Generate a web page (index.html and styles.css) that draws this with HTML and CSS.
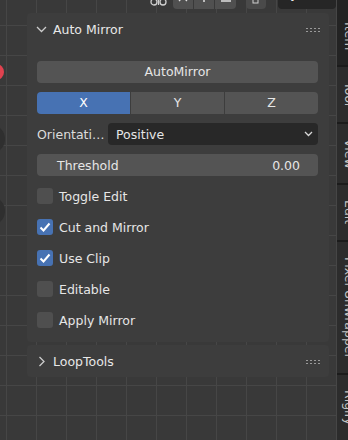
FILE: index.html
```html
<!DOCTYPE html>
<html lang="en">
<head>
    <meta charset="UTF-8">
    <link rel="stylesheet" href="styles.css">
</head>
<body>
    <div class="screen">
        <div class="main">
            <!-- tool header, only its lower edge is in view -->
            <div class="toolbar">
                <span class="tool-icon">
                    <svg width="17" height="20" viewBox="0 0 17 20"><circle cx="4" cy="13" r="3" fill="none" stroke="#d0d0d0" stroke-width="1.3"/><circle cx="13" cy="13" r="3" fill="none" stroke="#d0d0d0" stroke-width="1.3"/><path d="M8.5 6v10" stroke="#d0d0d0" stroke-width="1.3"/></svg>
                </span>
                <span class="tool-group">
                    <span class="tool-seg"><svg width="10" height="20" viewBox="0 0 10 20"><path d="M1 12l4 -4 4 4" fill="none" stroke="#e0e0e0" stroke-width="1.3"/></svg></span>
                    <span class="tool-seg"><svg width="10" height="20" viewBox="0 0 10 20"><path d="M5 6v7" stroke="#e0e0e0" stroke-width="1.5"/></svg></span>
                    <span class="tool-seg"><svg width="12" height="20" viewBox="0 0 12 20"><path d="M1 12h10" stroke="#e0e0e0" stroke-width="1.5"/><path d="M1 8h10" stroke="#e0e0e0" stroke-width="1.2"/></svg></span>
                </span>
                <span class="tool-btn"><svg width="10" height="20" viewBox="0 0 10 20"><rect x="2" y="9" width="5" height="5" fill="none" stroke="#cfcfcf" stroke-width="1"/></svg></span>
                <span class="tool-options">Options</span>
            </div>

            <div class="region">
                <div class="panel">
                    <div class="panel-head">
                        <svg class="chevron" width="11" height="7" viewBox="0 0 11 7"><path d="M1 1l4.5 4.5 4.5 -4.5" fill="none" stroke="#cccccc" stroke-width="1.3"/></svg>
                        <span class="panel-title">Auto Mirror</span>
                        <span class="grip"></span>
                    </div>
                    <div class="panel-body">
                        <div class="btn">AutoMirror</div>
                        <div class="seg-row">
                            <div class="seg active">X</div>
                            <div class="seg">Y</div>
                            <div class="seg">Z</div>
                        </div>
                        <div class="prop-row">
                            <span class="prop-label">Orientati…</span>
                            <div class="dropdown">
                                <span>Positive</span>
                                <svg width="9" height="6" viewBox="0 0 9 6"><path d="M1 1l3.5 3.5 3.5 -3.5" fill="none" stroke="#d8d8d8" stroke-width="1.3"/></svg>
                            </div>
                        </div>
                        <div class="number">
                            <span>Threshold</span>
                            <span>0.00</span>
                        </div>
                        <div class="check-row"><span class="box"></span>Toggle Edit</div>
                        <div class="check-row"><span class="box on"><svg width="16" height="16" viewBox="0 0 16 16"><path d="M3.5 8.5l3 3 6 -7" fill="none" stroke="#ffffff" stroke-width="2"/></svg></span>Cut and Mirror</div>
                        <div class="check-row"><span class="box on"><svg width="16" height="16" viewBox="0 0 16 16"><path d="M3.5 8.5l3 3 6 -7" fill="none" stroke="#ffffff" stroke-width="2"/></svg></span>Use Clip</div>
                        <div class="check-row"><span class="box"></span>Editable</div>
                        <div class="check-row"><span class="box"></span>Apply Mirror</div>
                    </div>
                </div>
                <div class="panel">
                    <div class="panel-head">
                        <svg class="chevron" width="11" height="11" viewBox="0 0 11 11"><path d="M3.5 1l4.5 4.5 -4.5 4.5" fill="none" stroke="#cccccc" stroke-width="1.3"/></svg>
                        <span class="panel-title">LoopTools</span>
                        <span class="grip"></span>
                    </div>
                </div>
            </div>
        </div>

        <div class="tabs">
            <div class="tab tab-item">Item</div>
            <div class="tab">Tool</div>
            <div class="tab">View</div>
            <div class="tab">Edit</div>
            <div class="tab">Pixel Unwrapper</div>
            <div class="tab">Rigify</div>
            <div class="tab">Misc</div>
        </div>
    </div>

    <!-- navigation gizmos peeking in from the left edge -->
    <span class="gizmo red"></span>
    <span class="gizmo dark g1"></span>
    <span class="gizmo dark g2"></span>
</body>
</html>
```

FILE: styles.css
```css
body {
    margin: 0;
    width: 348px;
    height: 440px;
    overflow: hidden;
    position: relative;
    font-family: "DejaVu Sans", sans-serif;
    font-size: 12.5px;
    color: #e6e6e6;
    background-color: #393939;
    background-image:
        linear-gradient(to right, #464646 1px, transparent 1px),
        linear-gradient(to bottom, #464646 1px, transparent 1px);
    background-size: 30px 30px;
    background-position: 6px 25px;
}

.screen {
    display: flex;
    width: 361px;
    height: 440px;
    overflow: hidden;
}

.main {
    width: 337px;
    flex-shrink: 0;
}

/* top tool header */
.toolbar {
    height: 9px;
    overflow: hidden;
    display: flex;
    align-items: flex-end;
    padding-left: 150px;
}

.tool-icon {
    width: 17px;
    height: 20px;
    margin-right: 6px;
    display: flex;
}

.tool-group {
    display: flex;
    gap: 1px;
    margin-right: 10px;
}

.tool-seg,
.tool-btn {
    width: 20px;
    height: 20px;
    background-color: #505050;
    display: flex;
    justify-content: center;
}

.tool-seg:first-child { border-radius: 0 0 0 4px; }
.tool-seg:last-child { width: 21px; border-radius: 0 0 4px 0; }

.tool-btn {
    width: 20px;
    border-radius: 0 0 4px 4px;
    margin-right: 12px;
    background-color: #4a4a4a;
}

.tool-options {
    width: 58px;
    height: 20px;
    background-color: #262626;
    border-radius: 0 0 4px 4px;
    font-size: 12.5px;
    font-weight: bold;
    color: #e8e8e8;
    text-align: center;
    line-height: 10px;
}

/* sidebar region */
.region {
    padding: 4px 8px 0 27px;
    display: flex;
    flex-direction: column;
    gap: 3px;
}

.panel {
    background-color: #3d3d3d;
    border-radius: 4px;
}

.panel-head {
    height: 32px;
    display: flex;
    align-items: center;
    padding: 0 9px;
}

.chevron {
    margin-right: 6px;
}

.panel-title {
    flex: 1;
    color: #e8e8e8;
}

.grip {
    width: 14px;
    height: 7px;
    background-image: radial-gradient(circle, #9a9a9a 0.9px, transparent 1.1px);
    background-size: 4px 3px;
    background-position: -1px 0;
    margin-top: 2px;
}

.panel-body {
    padding: 16px 11px 11px 10px;
    display: flex;
    flex-direction: column;
    gap: 9px;
}

.btn {
    height: 22px;
    line-height: 22px;
    background-color: #545454;
    border-radius: 4px;
    text-align: center;
}

.seg-row {
    display: flex;
    gap: 1px;
    height: 22px;
}

.seg {
    flex: 1;
    line-height: 22px;
    text-align: center;
    background-color: #545454;
}

.seg:first-child { border-radius: 4px 0 0 4px; }
.seg:last-child { border-radius: 0 4px 4px 0; }

.seg.active {
    background-color: #4772b3;
    color: #ffffff;
}

.prop-row {
    display: flex;
    height: 22px;
    align-items: center;
}

.prop-label {
    width: 71px;
    color: #dcdcdc;
}

.dropdown {
    flex: 1;
    height: 22px;
    background-color: #282828;
    border-radius: 4px;
    display: flex;
    align-items: center;
    justify-content: space-between;
    padding: 0 5px 0 8px;
}

.number {
    height: 22px;
    background-color: #545454;
    border-radius: 4px;
    display: flex;
    align-items: center;
    justify-content: space-between;
    padding: 0 18px 0 20px;
}

.check-row {
    height: 22px;
    display: flex;
    align-items: center;
    gap: 6px;
}

.box {
    width: 16px;
    height: 16px;
    border-radius: 3px;
    background-color: #4f4f4f;
    display: flex;
}

.box.on {
    background-color: #4772b3;
}

/* vertical tab strip */
.tabs {
    width: 24px;
    height: 440px;
    overflow: hidden;
    flex-shrink: 0;
    background-color: #1b1b1b;
    display: flex;
    flex-direction: column;
    gap: 2px;
}

.tab {
    writing-mode: vertical-rl;
    white-space: nowrap;
    flex-shrink: 0;
    background-color: #2c2c2c;
    color: #c4c4c4;
    padding: 15px 0;
    text-align: center;
    line-height: 24px;
}

.tab-item {
    padding-top: 22px;
    background-color: #232323;
}

/* gizmos */
.gizmo {
    position: absolute;
    border-radius: 50%;
}

.gizmo.red {
    width: 16px;
    height: 16px;
    left: -12px;
    top: 64px;
    background-color: #e0424f;
}

.gizmo.dark {
    width: 30px;
    height: 30px;
    left: -25px;
    background-color: #2f2f2f;
}

.g1 { top: 124px; }
.g2 { top: 196px; }
```
